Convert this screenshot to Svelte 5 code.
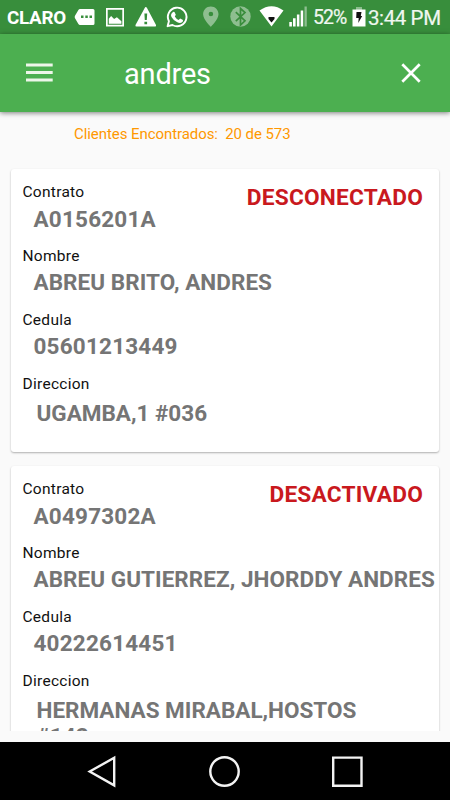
<script>
  const clients = [
    { contrato: 'A0156201A', nombre: 'ABREU BRITO, ANDRES', cedula: '05601213449', direccion: 'UGAMBA,1 #036', estado: 'DESCONECTADO' },
    { contrato: 'A0497302A', nombre: 'ABREU GUTIERREZ, JHORDDY ANDRES', cedula: '40222614451', direccion: 'HERMANAS MIRABAL,HOSTOS #142', estado: 'DESACTIVADO' }
  ];
</script>

<div class="screen">
  <div class="status">
    <span class="carrier">CLARO</span>
    <svg class="icons" width="250" height="34" viewBox="65 0 250 34" fill="#fff">
      <path fill-rule="evenodd" d="M80 9h13q1.500 0 1.500 1.500v13q0 1.500-1.500 1.500H80q-1 0-1.600-1L75 18.200q-.7-1.200 0-2.400L78.400 10Q79 9 80 9zM81 15.500v2.600h2.500v-2.600zM85.300 15.500v2.600h2.500v-2.600zM89.500 15.500v2.600H92v-2.600z" />
      <path fill-rule="evenodd" d="M106 8h18v18.500h-18zM107.700 9.700v15h14.600v-15z" />
      <path d="M108.800 23.700v-5l2.300-2.800 3 3 2.800-1.700 4.500 4v2.500z" />
      <path fill-rule="evenodd" d="M145.800 7Q146.500 7 147 8L156 25q.5 1.500-1 1.500h-18.500q-1.500 0-1-1.500L144.700 8q.4-1 1.100-1zM144.400 13.500l.4 6.500h2l.4-6.500zM144.400 21.700v2.600h2.700v-2.600z" />
      <path d="M167.600 26.200l1.300-5A9.300 9.300 0 1 1 172.500 25z" fill="none" stroke="#fff" stroke-width="1.900" stroke-linejoin="round" />
      <path d="M172.500 12.500q.8-1.300 2-.6l1.300 2.800-1 1.700q1.400 2.400 3.800 3.500l1.600-1.400 2.800 1.400q.3 1.700-1.300 2.600-1.900 1-4.800-.5-3.700-1.800-5.400-5-1.300-2.500 1-4.500z" />
      <g opacity=".43">
        <path fill-rule="evenodd" d="M210.800 6.500c-4.500 0-7.700 3.500-7.700 7.700 0 5.500 7.700 12.500 7.700 12.500s7.700-7 7.700-12.500c0-4.200-3.200-7.700-7.700-7.700zM208.600 14a2.300 2.300 0 1 0 4.600 0 2.300 2.300 0 1 0-4.600 0z" />
        <circle cx="240.500" cy="16.500" r="10.200" />
      </g>
      <path d="M235.800 12.200l9.200 8.600-4.500 4.200V8.500l4.500 4-9.200 8.700" fill="none" stroke="#398d3c" stroke-width="1.700" />
      <path d="M259.500 10.500Q271.500 2 283.500 10.500L271.500 26.500z" />
      <path d="M268.500 17h6v2l-3 3.500-3-3.500z" fill="#111" />
      <path d="M289.300 22h2.600v4.500h-2.600zM293 18.300h2.600v8.200H293zM296.900 14.500h2.500v12h-2.500zM300.700 10.500h2.500v16h-2.500z" />
      <path opacity=".43" d="M304.500 6.500h2.300v20h-2.300z" />
    </svg>
    <span class="percent">52%</span>
    <svg class="battery" width="14" height="34" viewBox="352 0 14 34">
      <path d="M356 7h6v3h-6z" fill="#8cbd8e" />
      <path d="M352.500 9.500h13v17h-13z" fill="#fff" />
      <path d="M356.500 12h5l-.7 4h1.400L358.300 23l.4-5h-2.500z" fill="#111" />
    </svg>
    <span class="clock">3:44 PM</span>
  </div>

  <header>
    <svg class="menu" width="28" height="24" viewBox="0 0 28 24"><path d="M0 4h26.700M0 11.600h26.700M0 19.100h26.700" stroke="#edf6e9" stroke-width="3" /></svg>
    <span class="query">andres</span>
    <svg class="close" width="20" height="20" viewBox="0 0 20 20"><path d="M1.300 1.300l17.400 17.400M18.700 1.300L1.300 18.700" stroke="#fff" stroke-width="2.700" /></svg>
  </header>

  <main>
    <p class="found">Clientes Encontrados:&nbsp; 20 de 573</p>
    <div class="list">
      {#each clients as c}
        <article>
          <div class="estado">{c.estado}</div>
          <div class="label">Contrato</div>
          <div class="value code">{c.contrato}</div>
          <div class="label">Nombre</div>
          <div class="value">{c.nombre}</div>
          <div class="label">Cedula</div>
          <div class="value code">{c.cedula}</div>
          <div class="label">Direccion</div>
          <div class="value address">{c.direccion}</div>
        </article>
      {/each}
    </div>
  </main>

  <nav>
    <svg width="450" height="58" viewBox="0 742 450 58" fill="none" stroke="#f3f3f3" stroke-width="2.400">
      <path d="M89.700 771.500L114.200 757.800v27.600z" />
      <circle cx="224.500" cy="771.500" r="14.200" />
      <path d="M333.200 757.600h28.300v28.200h-28.300z" />
    </svg>
  </nav>
</div>

<style>
  .screen {
    width: 450px;
    height: 800px;
    display: flex;
    flex-direction: column;
    overflow: hidden;
    background: #fafafa;
    font-family: Roboto, "Liberation Sans", sans-serif;
  }
  .status {
    height: 34px;
    flex: none;
    display: flex;
    align-items: center;
    background: #388e3c;
    color: #fff;
    white-space: nowrap;
  }
  .status svg { flex: none; }
  .carrier {
    width: 58px;
    padding-left: 7px;
    font-weight: 700;
    font-size: 18.800px;
    line-height: 34px;
    padding-top: 2px;
    letter-spacing: -0.250px;
  }
  .percent {
    width: 38px;
    margin-left: -2px;
    font-size: 19.500px;
    line-height: 34px;
    padding-top: 2px;
    letter-spacing: -0.900px;
    color: #f0f7f0;
    -webkit-text-stroke: .2px #f0f7f0;
  }
  .battery { margin-left: 1px; }
  .clock {
    margin-left: 2px;
    font-size: 20.500px;
    line-height: 34px;
    padding-top: 2px;
    letter-spacing: -0.400px;
    color: #f0f7f0;
    -webkit-text-stroke: .2px #f0f7f0;
  }
  header {
    height: 78px;
    flex: none;
    display: flex;
    align-items: center;
    background: #4caf50;
    box-shadow: 0 1px 5px rgba(0, 0, 0, .5);
    z-index: 1;
  }
  .menu { margin-left: 26px; }
  .query {
    flex: 1;
    margin-left: 70px;
    font-size: 29px;
    line-height: 40px;
    padding-top: 1px;
    letter-spacing: -0.200px;
    color: #fff;
  }
  .close { margin: 0 29.500px 0 0; }
  main {
    flex: 1;
    min-height: 0;
    display: flex;
    flex-direction: column;
  }
  .found {
    margin: 12px 0 0 74px;
    font-size: 15px;
    line-height: 21px;
    letter-spacing: -0.070px;
    color: #ff9800;
    white-space: nowrap;
  }
  .list {
    box-sizing: border-box;
    height: 563px;
    margin-top: 23px;
    padding: 1px 11px 0;
    overflow: hidden;
  }
  article {
    position: relative;
    box-sizing: border-box;
    min-height: 283px;
    margin-bottom: 14px;
    padding: 13px 0 0 11.500px;
    border-radius: 3px;
    background: #fff;
    box-shadow: 0 1px 2px rgba(0, 0, 0, .3);
  }
  .estado {
    position: absolute;
    top: 16px;
    right: 16px;
    font-weight: 700;
    font-size: 22.700px;
    line-height: 26px;
    letter-spacing: .2px;
    color: #c9191e;
  }
  .label {
    font-size: 15.500px;
    line-height: 20px;
    letter-spacing: .28px;
    color: #111;
  }
  .value {
    margin: 3.500px 0 14.400px 11px;
    font-weight: 700;
    font-size: 22.500px;
    line-height: 26px;
    letter-spacing: .05px;
    color: #757575;
    white-space: nowrap;
  }
  .code { letter-spacing: .2px; }
  .address {
    margin-top: 6px;
    margin-left: 14px;
    max-width: 350px;
    letter-spacing: 0;
    white-space: normal;
  }
  nav {
    height: 58px;
    flex: none;
    background: #000;
  }
  nav svg { display: block; }
</style>
